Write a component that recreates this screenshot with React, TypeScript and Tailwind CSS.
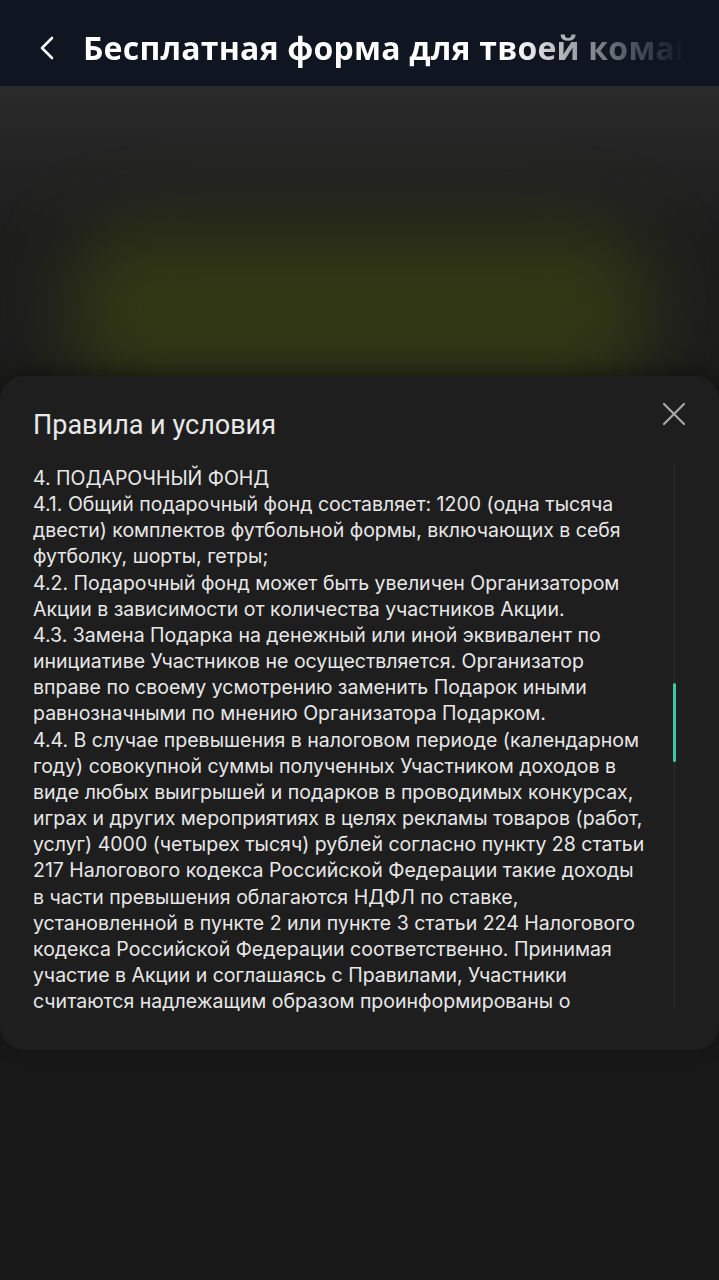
import React from "react";

const lines = [
  "4. ПОДАРОЧНЫЙ ФОНД",
  "4.1. Общий подарочный фонд составляет: 1200 (одна тысяча",
  "двести) комплектов футбольной формы, включающих в себя",
  "футболку, шорты, гетры;",
  "4.2. Подарочный фонд может быть увеличен Организатором",
  "Акции в зависимости от количества участников Акции.",
  "4.3. Замена Подарка на денежный или иной эквивалент по",
  "инициативе Участников не осуществляется. Организатор",
  "вправе по своему усмотрению заменить Подарок иными",
  "равнозначными по мнению Организатора Подарком.",
  "4.4. В случае превышения в налоговом периоде (календарном",
  "году) совокупной суммы полученных Участником доходов в",
  "виде любых выигрышей и подарков в проводимых конкурсах,",
  "играх и других мероприятиях в целях рекламы товаров (работ,",
  "услуг) 4000 (четырех тысяч) рублей согласно пункту 28 статьи",
  "217 Налогового кодекса Российской Федерации такие доходы",
  "в части превышения облагаются НДФЛ по ставке,",
  "установленной в пункте 2 или пункте 3 статьи 224 Налогового",
  "кодекса Российской Федерации соответственно. Принимая",
  "участие в Акции и соглашаясь с Правилами, Участники",
  "считаются надлежащим образом проинформированы о",
];

export default function App() {
  return (
    <div className="w-[719px] h-[1280px] overflow-hidden bg-[#181818] flex flex-col relative">
      {/* Header */}
      <div className="h-[86px] bg-[#0f1621] flex items-center shrink-0 relative z-10 pt-[10px]">
        <div className="w-[83px] flex items-center justify-start pl-[37px]">
          <svg width="20" height="28" viewBox="0 0 20 28" fill="none">
            <path d="M15 4 L5 14 L15 24" stroke="#ffffff" strokeWidth="2.6" strokeLinecap="round" strokeLinejoin="round" />
          </svg>
        </div>
        <div className="flex-1 overflow-hidden pr-[38px]">
          <div
            className="whitespace-nowrap text-[32px] font-bold tracking-[0.2px] bg-gradient-to-r from-white from-72% to-[#141c28] to-100% bg-clip-text text-transparent"
            style={{ fontFamily: '"Open Sans", "DejaVu Sans", sans-serif' }}
          >
            Бесплатная форма для твоей команды
          </div>
        </div>
      </div>

      {/* Background with glow */}
      <div className="h-[300px] shrink-0 relative bg-gradient-to-b from-[#2a2a2a] via-[#1d1d1d] to-[#1c1c1c] overflow-hidden">
        <div className="absolute left-[70px] right-[70px] top-[140px] h-[170px] rounded-[60px] bg-[#343a14] opacity-90 blur-[38px]" />
      </div>

      {/* Modal */}
      <div className="absolute left-0 right-0 top-[376px] h-[674px] rounded-[24px] bg-[#1e1e1e] shadow-[0_-6px_20px_rgba(0,0,0,0.35)]">
        <div className="flex items-start justify-between pl-[33px] pr-[33px] pt-[31px]">
          <div
            className="text-[27px] text-[#e8e8e8] leading-[36px]"
            style={{ fontFamily: 'Roboto, "Noto Sans", sans-serif' }}
          >
            Правила и условия
          </div>
          <svg width="24" height="24" viewBox="0 0 24 24" className="mt-[-5px]">
            <path d="M2 2 L22 22 M22 2 L2 22" stroke="#a8a8a8" strokeWidth="2.2" strokeLinecap="round" />
          </svg>
        </div>
        <div className="flex mt-[22px]">
          <div
            className="pl-[33px] flex-1 text-[19.5px] leading-[26.15px] text-[#e8e8e8]"
            style={{ fontFamily: 'Inter, "Noto Sans", sans-serif' }}
          >
            {lines.map((l, i) => (
              <div key={i} className="whitespace-nowrap">
                {l}
              </div>
            ))}
          </div>
          <div className="w-[3px] mr-[43px] mt-[-2px] h-[547px] bg-[#232323] relative">
            <div className="absolute left-0 top-[220px] w-[3px] h-[79px] rounded-full bg-[#3ec9a6]" />
          </div>
        </div>
      </div>
    </div>
  );
}
